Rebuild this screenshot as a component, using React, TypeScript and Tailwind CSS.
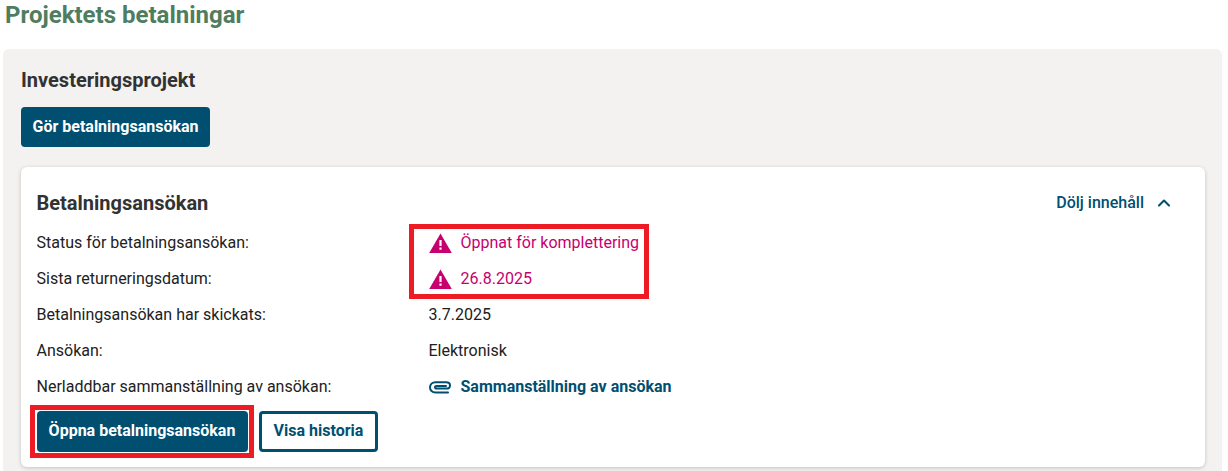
import { ChevronUp } from "lucide-react";

const Warning = () => (
  <svg width="23" height="20" viewBox="0 0 23 20" className="shrink-0">
    <path d="M11.5 0.5 L22.8 20 H0.2 Z" fill="#c6006f" />
    <rect x="10.4" y="7" width="2.2" height="6" fill="#fff" />
    <rect x="10.4" y="14.5" width="2.2" height="2.2" fill="#fff" />
  </svg>
);

const Clip = () => (
  <svg width="22" height="13" viewBox="0 0 22 13" fill="none" stroke="#004f71" strokeWidth="2" strokeLinecap="round" className="shrink-0">
    <path d="M19 11.5 H6.5 C3.2 11.5 1 9.3 1 6.5 C1 3.5 3.2 1.2 6.5 1.2 H17 C19.4 1.2 21 2.6 21 4.4 C21 6.2 19.4 7.6 17 7.6 H7.8 C6.6 7.6 6 7 6 6.3 C6 5.5 6.6 4.9 7.8 4.9 H17" />
  </svg>
);

function Row({ label, children }: { label: string; children: React.ReactNode }) {
  return (
    <div className="flex items-center h-[36px] -ml-[0.5px]">
      <div className="w-[392px] shrink-0 text-[#212121]">{label}</div>
      {children}
    </div>
  );
}

export default function App() {
  return (
    <div className="relative h-[471px] w-[1228px] overflow-hidden bg-white font-['Roboto',sans-serif] text-[16px]">
      <h1 className="pl-[5px] pt-[1px] text-[24px] leading-[28px] font-bold text-[#4f7d60]">Projektets betalningar</h1>

      <div className="ml-[3px] mt-[20px] w-[1219px] h-[440px] rounded-t-[6px] bg-[#f3f2f1] pl-[18px] pr-[17px] pt-[18px]">
        <h2 className="text-[20px] leading-[26px] font-bold text-[#323232]">Investeringsprojekt</h2>
        <button className="mt-[14px] block h-[40px] w-[189px] rounded-[4px] bg-[#004f71] text-[16px] font-bold text-white">
          Gör betalningsansökan
        </button>

        <div className="mt-[20px] h-[300px] rounded-[6px] bg-white px-[16px] pt-[23px] shadow-[0_1px_4px_rgba(0,0,0,0.2)]">
          <div className="flex items-center justify-between h-[26px]">
            <h3 className="-ml-[0.5px] text-[20px] leading-[26px] font-bold text-[#323232]">Betalningsansökan</h3>
            <div className="flex items-center pr-[15px] text-[#004f71] font-medium">
              <span>Dölj innehåll</span>
              <ChevronUp size={20} strokeWidth={2.5} className="ml-[10px]" />
            </div>
          </div>

          <div className="mt-[9px]">
            <Row label="Status för betalningsansökan:">
              <div className="flex items-center gap-[9px] text-[#c6006f]">
                <Warning />
                <span>Öppnat för komplettering</span>
              </div>
            </Row>
            <Row label="Sista returneringsdatum:">
              <div className="flex items-center gap-[9px] text-[#c6006f]">
                <Warning />
                <span>26.8.2025</span>
              </div>
            </Row>
            <Row label="Betalningsansökan har skickats:">
              <span className="text-[#212121]">3.7.2025</span>
            </Row>
            <Row label="Ansökan:">
              <span className="text-[#212121]">Elektronisk</span>
            </Row>
            <Row label="Nerladdbar sammanställning av ansökan:">
              <div className="flex items-center gap-[10px] font-bold text-[#004f71]">
                <Clip />
                <span>Sammanställning av ansökan</span>
              </div>
            </Row>
          </div>

          <div className="mt-[6px] flex gap-[11px]">
            <button className="h-[41px] w-[211px] rounded-[4px] bg-[#004f71] pb-[2px] pr-[1px] font-bold text-white">Öppna betalningsansökan</button>
            <button className="h-[41px] w-[119px] rounded-[4px] border-[3px] border-[#004f71] bg-white pb-[2px] font-bold text-[#004f71]">Visa historia</button>
          </div>
        </div>
      </div>

      {/* red annotation boxes drawn over the screenshot */}
      <div className="absolute left-[409px] top-[224px] h-[75px] w-[240px] border-[5px] border-[#ed1c24]" />
      <div className="absolute left-[30px] top-[405px] h-[53px] w-[224px] border-[5px] border-[#ed1c24]" />
    </div>
  );
}
